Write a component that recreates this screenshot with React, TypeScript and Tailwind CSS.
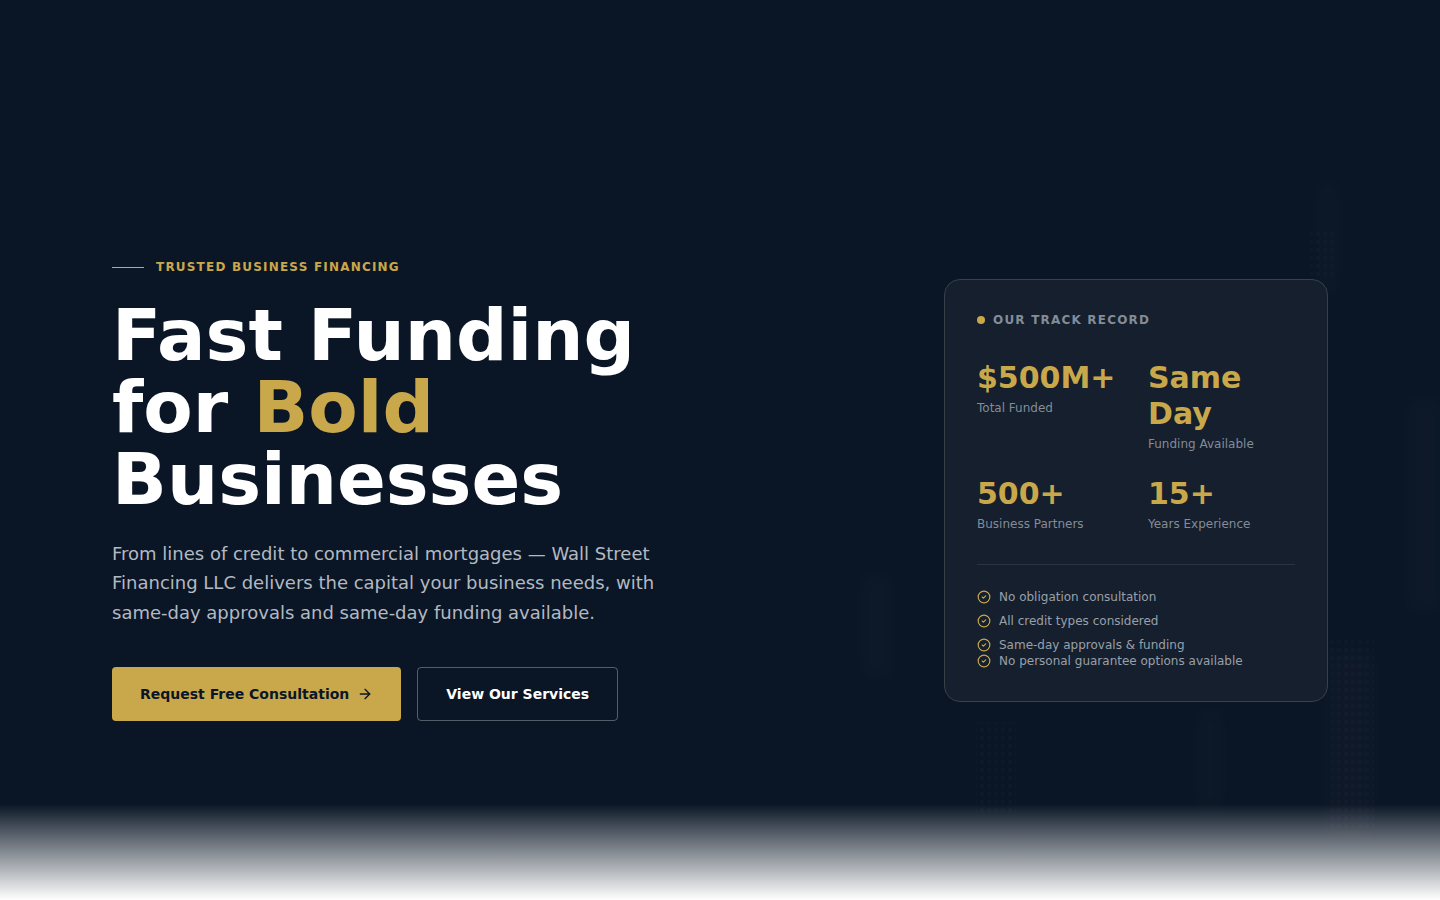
import { ArrowRight } from 'lucide-react';

type Stat = { value: string; label: string };

const STATS: Stat[] = [
  { value: '$500M+', label: 'Total Funded' },
  { value: 'Same Day', label: 'Funding Available' },
  { value: '500+', label: 'Business Partners' },
  { value: '15+', label: 'Years Experience' },
];

const PERKS = ['No obligation consultation', 'All credit types considered', 'Same-day approvals & funding'];

function CheckIcon() {
  return (
    <svg
      viewBox="0 0 24 24"
      fill="none"
      stroke="currentColor"
      strokeWidth="2"
      strokeLinecap="round"
      strokeLinejoin="round"
      className="size-3.5 shrink-0 text-[#c9a84c]"
      aria-hidden="true"
    >
      <circle cx="12" cy="12" r="10" />
      <path d="m9 12 2 2 4-4" />
    </svg>
  );
}

function Perk({ children }: { children: string }) {
  return (
    <div className="flex items-center gap-2 text-xs text-[#98a0ab]">
      <CheckIcon />
      <span>{children}</span>
    </div>
  );
}

// faint city lights behind the hero
function Skyline() {
  return (
    <svg
      viewBox="0 0 1440 900"
      preserveAspectRatio="xMidYMid slice"
      className="absolute inset-0 h-full w-full"
      aria-hidden="true"
    >
      <defs>
        <pattern id="windows" width="7" height="8" patternUnits="userSpaceOnUse">
          <rect width="4" height="4" fill="#fff" />
        </pattern>
        <filter id="soft" x="-100%" width="300%">
          <feGaussianBlur stdDeviation="8" />
        </filter>
      </defs>
      <g fill="#c09090" opacity="0.02" filter="url(#soft)">
        <rect x="1320" y="182" width="16" height="110" />
        <rect x="1410" y="400" width="30" height="210" />
        <rect x="1200" y="710" width="20" height="100" />
        <rect x="1326" y="650" width="46" height="190" />
        <rect x="864" y="576" width="26" height="100" />
      </g>
      <g fill="url(#windows)" opacity="0.012">
        <rect x="1310" y="230" width="24" height="50" />
        <rect x="1330" y="640" width="44" height="190" />
        <rect x="976" y="722" width="40" height="90" />
      </g>
    </svg>
  );
}

export default function Hero() {
  return (
    <section className="relative flex min-h-screen items-center overflow-hidden bg-[#0a1626] pt-20 font-['DejaVu_Sans',sans-serif]">
      <Skyline />
      <div className="absolute inset-x-0 bottom-0 h-24 bg-linear-to-t from-white to-transparent" />

      <div className="relative mx-auto flex w-full max-w-7xl flex-col gap-12 px-8 lg:flex-row lg:items-center lg:justify-between">
        <div className="max-w-xl">
          <div className="mb-6 flex items-center gap-3">
            <span className="h-px w-8 bg-[#c9a84c]" />
            <span className="text-xs font-semibold tracking-widest text-[#c9a84c] uppercase">
              Trusted Business Financing
            </span>
          </div>
          <h1 className="text-7xl leading-none font-bold text-white">
            Fast Funding
            <br />
            for <span className="text-[#c9a84c]">Bold</span>
            <br />
            Businesses
          </h1>
          <p className="mt-6 text-lg leading-relaxed text-[#b3b9c1]">
            From lines of credit to commercial mortgages — Wall Street Financing LLC delivers the capital your
            business needs, with same-day approvals and same-day funding available.
          </p>
          <div className="mt-10 flex flex-wrap gap-4">
            <a
              href="#consultation"
              className="inline-flex items-center gap-2 rounded-sm bg-[#c9a84c] px-7 py-4 text-sm font-bold text-[#0a1628]"
            >
              Request Free Consultation
              <ArrowRight className="size-4" />
            </a>
            <a
              href="#services"
              className="inline-flex items-center rounded-sm border border-white/30 px-7 py-4 text-sm font-semibold text-white"
            >
              View Our Services
            </a>
          </div>
        </div>

        <aside className="w-full shrink-0 rounded-2xl border border-[#36424a] bg-[#151f2d] p-8 lg:w-96">
          <div className="mb-8 flex items-center gap-2">
            <span className="size-2 rounded-full bg-[#c9a84c]" />
            <h2 className="text-xs font-semibold tracking-widest text-[#838c98] uppercase">Our Track Record</h2>
          </div>
          <div className="grid grid-cols-2 gap-6">
            {STATS.map((s) => (
              <div key={s.label}>
                <div className="text-3xl font-bold text-[#c9a84c]">{s.value}</div>
                <div className="mt-1 text-xs text-[#838c98]">{s.label}</div>
              </div>
            ))}
          </div>
          <div className="mt-8 border-t border-[#263540] pt-6">
            <div className="space-y-2">
              {PERKS.map((perk) => (
                <Perk key={perk}>{perk}</Perk>
              ))}
            </div>
            <Perk>No personal guarantee options available</Perk>
          </div>
        </aside>
      </div>
    </section>
  );
}
